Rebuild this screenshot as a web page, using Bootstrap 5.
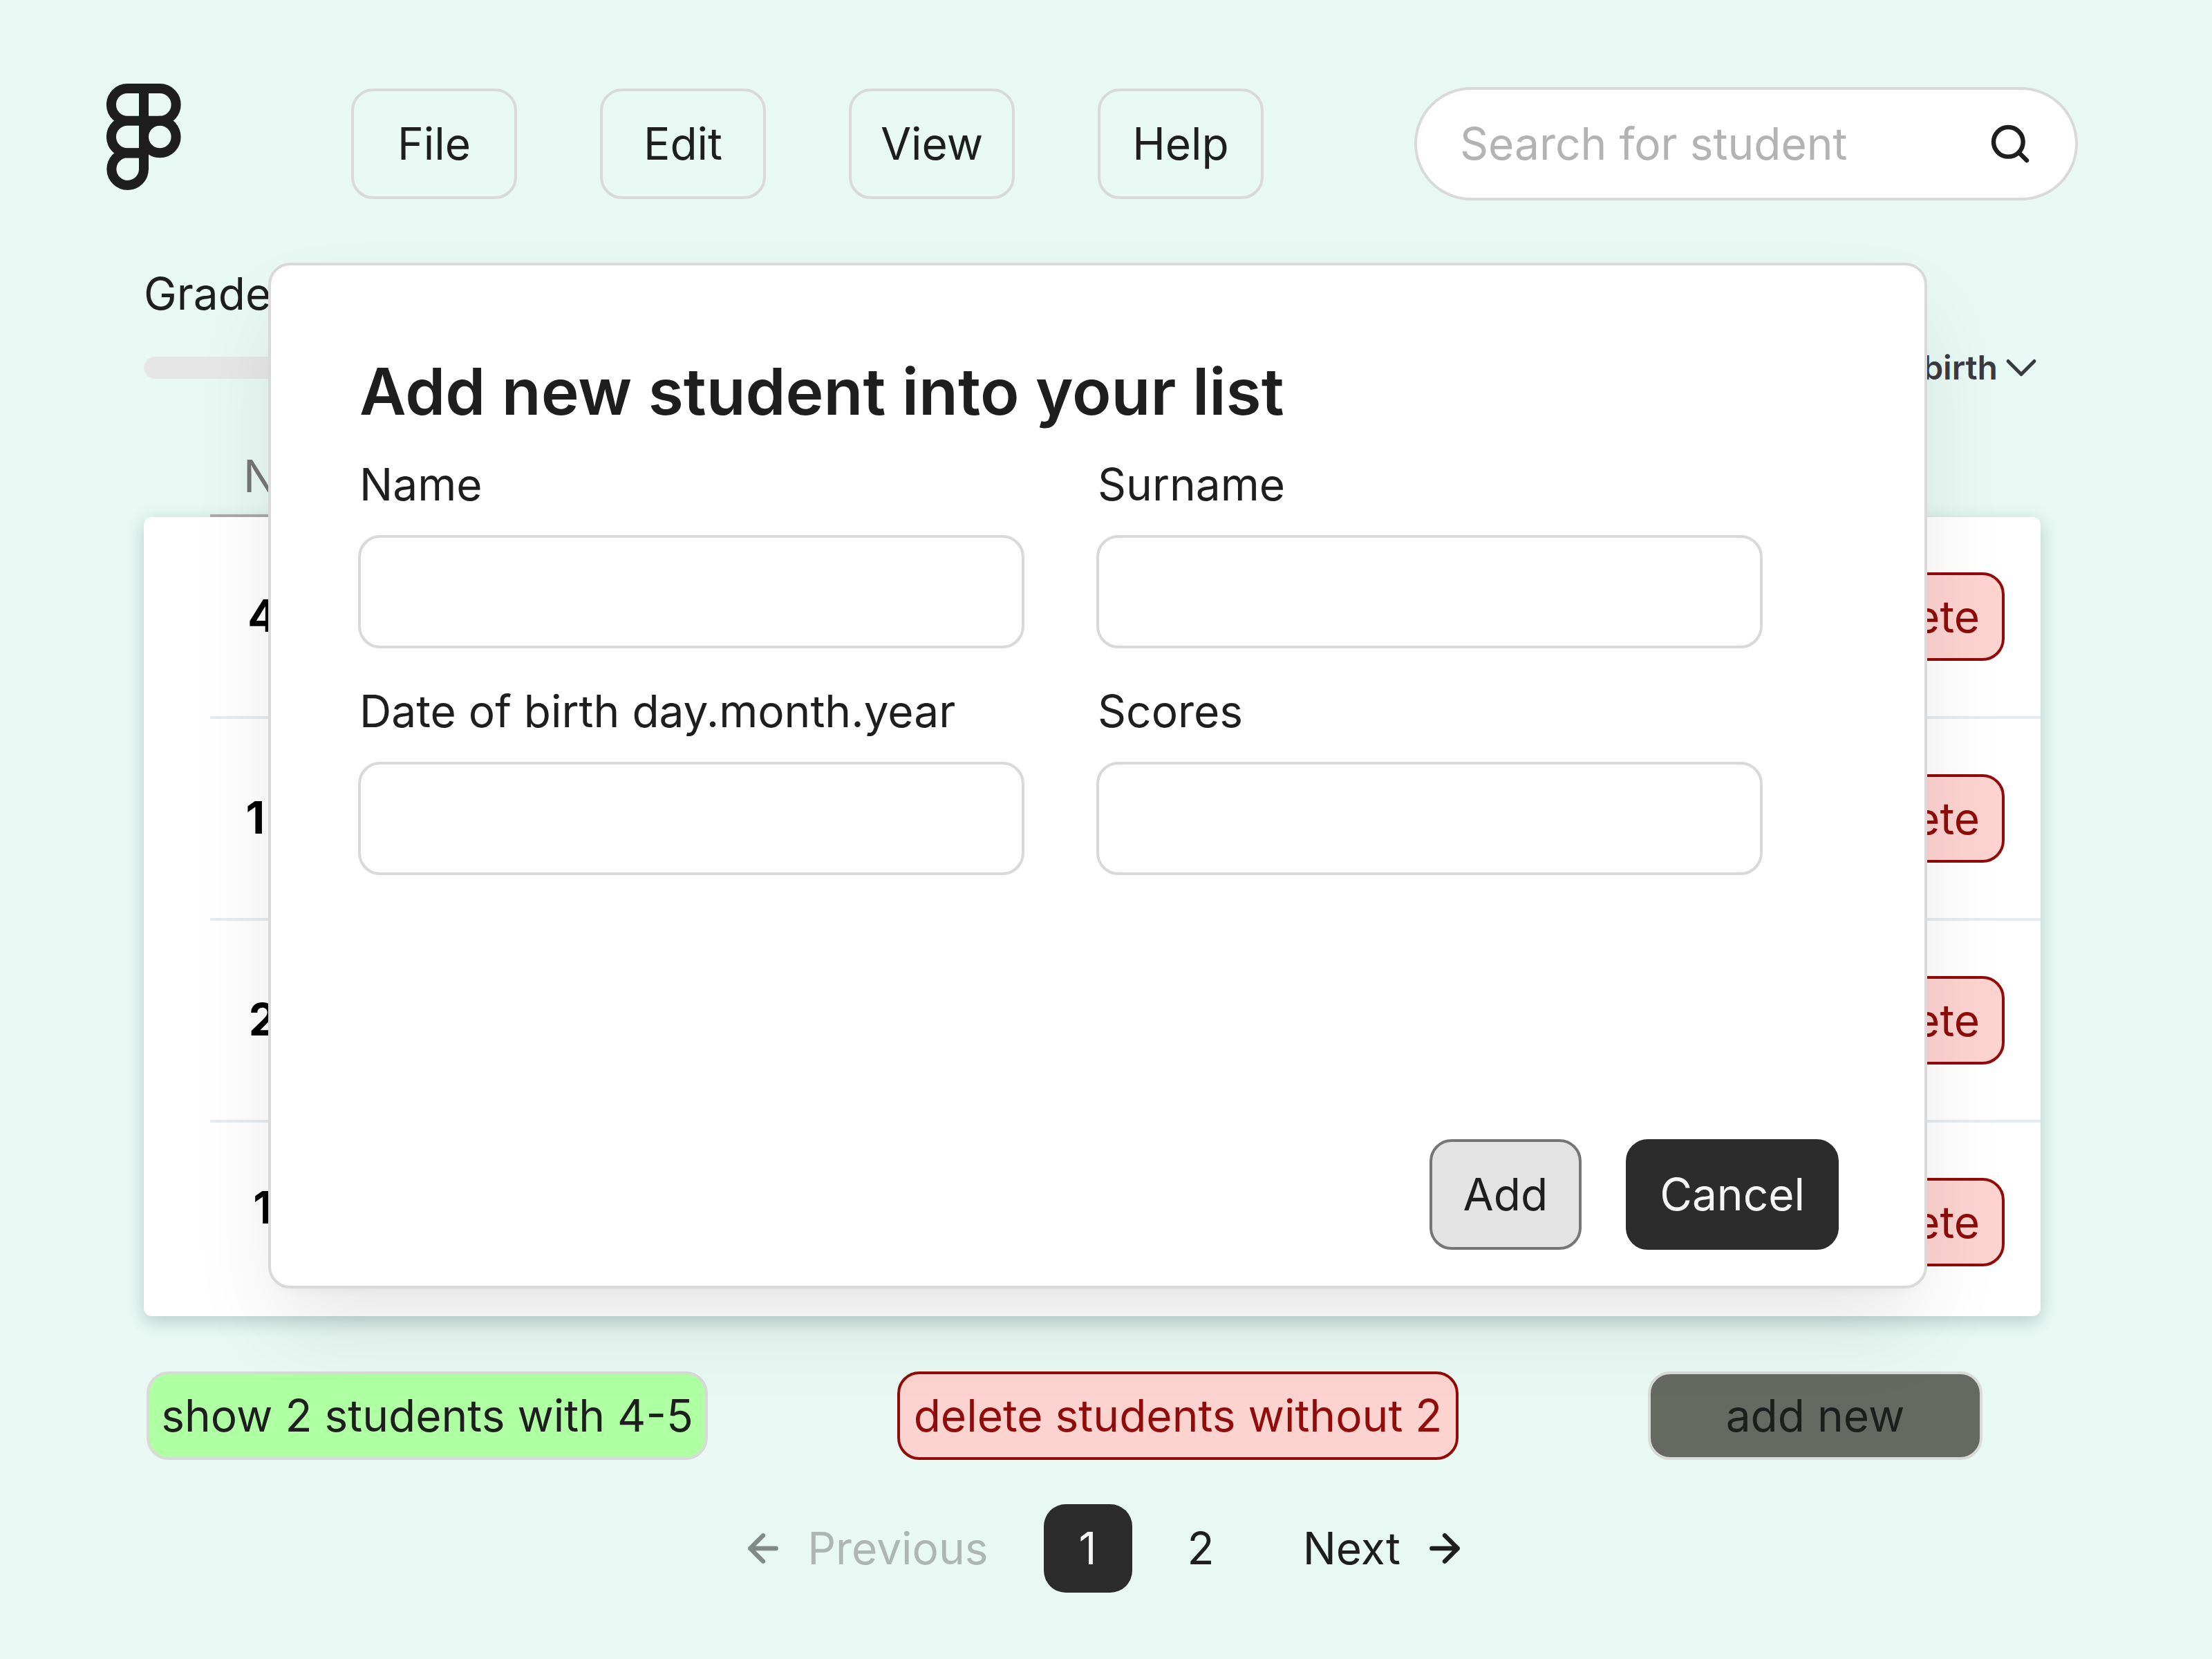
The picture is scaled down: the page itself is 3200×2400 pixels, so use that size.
<!DOCTYPE html>
<html lang="en">
<head>
<meta charset="utf-8">
<meta name="viewport" content="width=device-width, initial-scale=1">
<title>Students</title>
<link href="https://cdn.jsdelivr.net/npm/bootstrap@5.3.0/dist/css/bootstrap.min.css" rel="stylesheet">
<style>
  :root { --ink: #1e1e1e; --line: #d9d9d9; --danger-ink: #900b09; --danger-fill: #fdd3d0; }
  body { background: #e8f9f3; color: var(--ink); font-family: Inter, "Liberation Sans", sans-serif; font-size: 64px; line-height: 90px; }
  .topbar { padding: 121px 194px 0 154px; }
  .brand-mark { width: 108px; height: 174px; margin-right: 246px; flex: none; }
  .brand-mark svg, .glyph { display: block; flex: none; }
  .menu-list { gap: 120px; margin-right: 218px; }
  .ui-btn { --bs-btn-font-size: 64px; --bs-btn-line-height: 64px; --bs-btn-border-width: 4px; --bs-btn-border-radius: 32px; --bs-btn-padding-y: 28px; --bs-btn-padding-x: 32px; --bs-btn-color: var(--ink); --bs-btn-border-color: var(--line); --bs-btn-font-family: Inter, "Liberation Sans", sans-serif; white-space: nowrap; }
  .btn-tall { --bs-btn-padding-y: 44px; --bs-btn-padding-x: 45px; }
  .btn-menu { width: 240px; --bs-btn-padding-x: 8px; }
  .btn-wide { width: 812px; --bs-btn-padding-x: 8px; }
  .btn-pass { --bs-btn-bg: #afffa3; }
  .btn-remove { --bs-btn-bg: var(--danger-fill); --bs-btn-color: var(--danger-ink); --bs-btn-border-color: var(--danger-ink); }
  .btn-create { width: 484px; --bs-btn-bg: #656962; }
  .btn-neutral { --bs-btn-bg: #e3e3e3; --bs-btn-border-color: #767676; }
  .btn-solid { --bs-btn-bg: #2c2c2c; --bs-btn-color: #f5f5f5; --bs-btn-border-color: #2c2c2c; }
  .search-box { height: 164px; border: 4px solid var(--line); border-radius: 82px; padding: 0 62px; min-width: 0; }
  .search-box input { color: var(--ink); outline: 0; width: 0; padding: 0; line-height: 90px; }
  .search-box input::placeholder { color: #b3b3b3; opacity: 1; }
  .board { padding: 85px 248px 0 208px; }
  .filter-row { margin-top: 30px; height: 64px; }
  .grade-range { appearance: none; width: 960px; height: 32px; border-radius: 16px; background: #e6e6e6; }
  .grade-range::-webkit-slider-thumb { appearance: none; width: 64px; height: 64px; border-radius: 50%; background: #2c2c2c; }
  .sort-btn { color: #3c3a41; font-size: 48px; line-height: 64px; font-weight: 600; gap: 6px; }
  .roster { width: 100%; margin-top: 80px; border-collapse: separate; border-spacing: 0; table-layout: fixed; }
  .roster .col-lead { width: 96px; }
  .roster .col-num { width: 152px; }
  .roster thead th { padding: 0 8px 10px 0; font-weight: 400; color: #757575; border-bottom: 4px solid #b0b0b0; }
  .roster thead td { border: 0; }
  .roster tbody { border-radius: 12px; box-shadow: 0 4px 28px rgba(60, 85, 100, .14), 0 10px 22px rgba(60, 85, 100, .14); }
  .roster tbody td, .roster tbody th { height: 292px; padding: 80px 0; vertical-align: top; background: #fff; border-bottom: 4px solid #e6ebef; }
  .roster tbody th { padding-top: 98px; font-weight: 700; color: #000; }
  .roster tbody .edge { border: 0; }
  .roster tbody tr:last-child > * { height: 280px; border: 0; padding-bottom: 72px; }
  .roster tbody tr:last-child th { padding-top: 78px; }
  .roster tbody tr:first-child td:first-child { border-top-left-radius: 12px; }
  .roster tbody tr:first-child td:last-child { border-top-right-radius: 12px; }
  .roster tbody tr:last-child td:first-child { border-bottom-left-radius: 12px; }
  .roster tbody tr:last-child td:last-child { border-bottom-right-radius: 12px; }
  .roster .tools { padding-right: 52px; text-align: right; }
  .roster .ui-btn { vertical-align: top; }
  .action-row { margin-top: 80px; padding: 0 84px 0 4px; }
  .pager { margin-top: 64px; gap: 32px; padding-right: 6px; }
  .pager a { color: var(--ink); text-decoration: none; height: 128px; border-radius: 32px; }
  .pager .pager-step { gap: 32px; padding: 0 32px; }
  .pager .pager-off { opacity: .5; }
  .pager .pager-off span { color: #757575; }
  .pager-pages { gap: 32px; padding: 0 16px; }
  .pager-pages a { min-width: 128px; padding: 0 48px; }
  .pager-pages .pager-now { background: #2c2c2c; color: #f5f5f5; }
  .add-dialog { top: 380px; left: 388px; right: 412px; min-height: 1484px; padding: 124px 124px 52px 128px; background: #fff; border: 4px solid var(--line); border-radius: 32px; box-shadow: 0 64px 128px -16px rgba(12, 12, 13, .1), 0 16px 16px -16px rgba(12, 12, 13, .05); }
  .dialog-title { font-size: 93px; line-height: 116px; font-weight: 600; margin: 0 0 32px; }
  .field-grid { display: grid; grid-template-columns: 1fr 1fr; gap: 46px 108px; margin-right: 112px; }
  .field-grid label { display: block; margin-bottom: 28px; }
  .field-grid .form-control { width: calc(100% + 4px); height: 164px; margin: 0 -2px; border: 4px solid var(--line); border-radius: 32px; padding: 0 60px; font-size: 64px; }
  .dialog-actions { gap: 64px; }
</style>
</head>
<body>
<header class="topbar d-flex align-items-center">
  <a class="brand-mark" href="#" aria-label="Home">
    <svg width="108" height="174" viewBox="0 0 108 174" fill="none" stroke="#1e1e1e" stroke-width="14">
      <path d="M54 7H30.300a23.300 23.300 0 0 0 0 46.700H54zM54 7h23.300a23.300 23.300 0 0 1 0 46.700H54zM54 53.700H30.300a23.300 23.300 0 0 0 0 46.700H54z"/>
      <circle cx="77.300" cy="77" r="23.300"/>
      <path d="M54 100.300H30.300A23.300 23.300 0 1 0 54 123.600z"/>
    </svg>
  </a>
  <nav class="menu-list d-flex">
    <button type="button" class="btn ui-btn btn-tall btn-menu">File</button>
    <button type="button" class="btn ui-btn btn-tall btn-menu">Edit</button>
    <button type="button" class="btn ui-btn btn-tall btn-menu">View</button>
    <button type="button" class="btn ui-btn btn-tall btn-menu">Help</button>
  </nav>
  <div class="search-box d-flex align-items-center flex-grow-1 bg-white">
    <input type="search" class="border-0 bg-transparent flex-grow-1" placeholder="Search for student" aria-label="Search for student">
    <svg class="glyph" width="64" height="64" viewBox="0 0 16 16" fill="none" stroke="#1e1e1e" stroke-width="1.600" stroke-linecap="round"><circle cx="7.333" cy="7.333" r="5.333"/><path d="M14 14l-2.900-2.900"/></svg>
  </div>
</header>

<main class="board">
  <label class="d-block" for="grade">Grade</label>
  <div class="filter-row d-flex align-items-center justify-content-between">
    <input type="range" class="grade-range" id="grade" min="0" max="100" value="50">
    <button type="button" class="sort-btn btn p-0 border-0 d-flex align-items-center">Date of birth
      <svg class="glyph" width="56" height="56" viewBox="0 0 56 56" fill="none" stroke="#3c3a41" stroke-width="5" stroke-linecap="round" stroke-linejoin="round"><path d="M9 18.500L28 37.500L47 18.500"/></svg>
    </button>
  </div>

  <table class="roster">
    <colgroup><col class="col-lead"><col class="col-num"><col></colgroup>
    <thead>
      <tr><td></td><th scope="col" class="text-center">N</th><td></td></tr>
    </thead>
    <tbody>
      <tr><td class="edge"></td><th scope="row" class="text-center">4</th><td class="tools"><button type="button" class="btn ui-btn btn-remove">delete</button></td></tr>
      <tr><td class="edge"></td><th scope="row" class="text-center">1.</th><td class="tools"><button type="button" class="btn ui-btn btn-remove">delete</button></td></tr>
      <tr><td class="edge"></td><th scope="row" class="text-center">2</th><td class="tools"><button type="button" class="btn ui-btn btn-remove">delete</button></td></tr>
      <tr><td class="edge"></td><th scope="row" class="text-center">1</th><td class="tools"><button type="button" class="btn ui-btn btn-remove">delete</button></td></tr>
    </tbody>
  </table>

  <div class="action-row d-flex justify-content-between">
    <button type="button" class="btn ui-btn btn-wide btn-pass">show 2 students with 4-5</button>
    <button type="button" class="btn ui-btn btn-wide btn-remove">delete students without 2</button>
    <button type="button" class="btn ui-btn btn-create">add new</button>
  </div>
</main>

<nav class="pager d-flex justify-content-center" aria-label="Pages">
  <a href="#" class="pager-step pager-off d-flex align-items-center" aria-disabled="true">
    <svg class="glyph" width="64" height="64" viewBox="0 0 16 16" fill="none" stroke="#1e1e1e" stroke-width="1.600" stroke-linecap="round" stroke-linejoin="round"><path d="M12.667 8H3.333M8 12.667L3.333 8L8 3.333"/></svg>
    <span>Previous</span>
  </a>
  <div class="pager-pages d-flex">
    <a href="#" class="pager-now d-flex align-items-center justify-content-center" aria-current="page">1</a>
    <a href="#" class="d-flex align-items-center justify-content-center">2</a>
  </div>
  <a href="#" class="pager-step d-flex align-items-center">
    <span>Next</span>
    <svg class="glyph" width="64" height="64" viewBox="0 0 16 16" fill="none" stroke="#1e1e1e" stroke-width="1.600" stroke-linecap="round" stroke-linejoin="round"><path d="M3.333 8h9.334M8 3.333L12.667 8L8 12.667"/></svg>
  </a>
</nav>

<form class="add-dialog position-absolute d-flex flex-column" role="dialog" aria-labelledby="dialog-title">
  <h1 class="dialog-title" id="dialog-title">Add new student into your list</h1>
  <div class="field-grid">
    <div><label for="first-name">Name</label><input type="text" class="form-control" id="first-name"></div>
    <div><label for="surname">Surname</label><input type="text" class="form-control" id="surname"></div>
    <div><label for="birth-date">Date of birth day.month.year</label><input type="text" class="form-control" id="birth-date"></div>
    <div><label for="scores">Scores</label><input type="text" class="form-control" id="scores"></div>
  </div>
  <div class="dialog-actions d-flex justify-content-end mt-auto">
    <button type="submit" class="btn ui-btn btn-tall btn-neutral">Add</button>
    <button type="button" class="btn ui-btn btn-tall btn-solid">Cancel</button>
  </div>
</form>
<script src="https://cdn.jsdelivr.net/npm/bootstrap@5.3.0/dist/js/bootstrap.bundle.min.js"></script>
</body>
</html>
